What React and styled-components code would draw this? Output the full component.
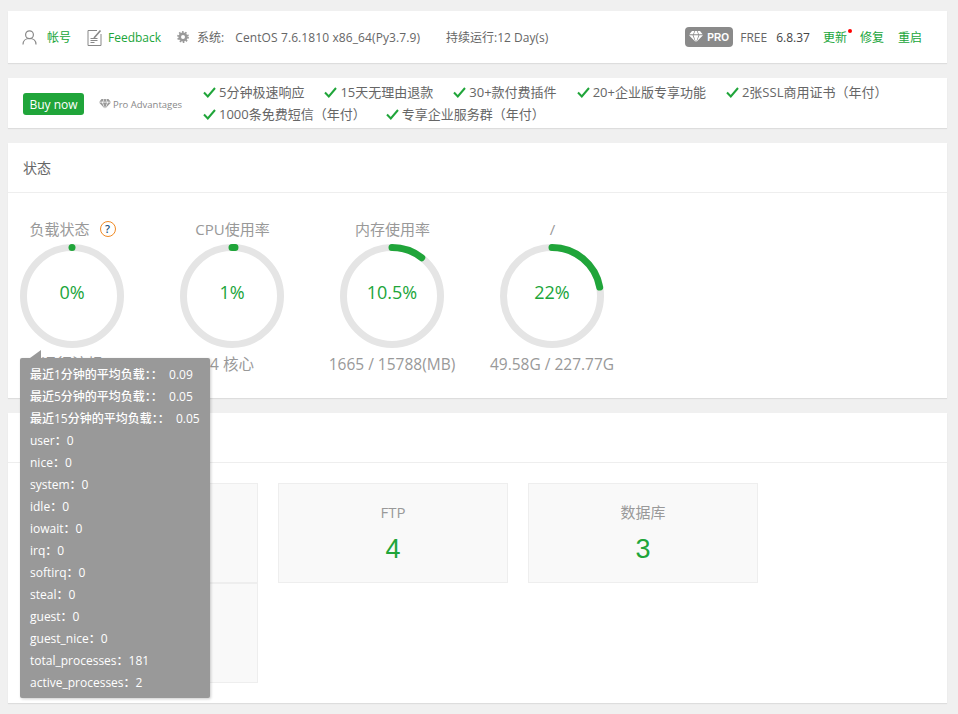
import React from "react";
import styled, { createGlobalStyle } from "styled-components";

const GlobalStyle = createGlobalStyle`
  html, body {
    margin: 0;
    padding: 0;
    background: #f0f0f0;
    font-family: "Open Sans", "Noto Sans CJK SC", sans-serif;
    font-size: 12px;
    color: #666;
  }
  * { box-sizing: border-box; }
`;

const Page = styled.div`
  position: relative;
  width: 958px;
  height: 714px;
  overflow: hidden;
  padding: 11px 11px 0 8px;
`;

const Panel = styled.section`
  background: #fff;
  box-shadow: 0 1px 1px rgba(0, 0, 0, 0.08);
  margin-bottom: 15px;
`;

const TopBar = styled(Panel)`
  height: 52px;
  display: flex;
  align-items: center;
  padding: 0 25px 0 14px;
  white-space: nowrap;
`;

const IconSlot = styled.span`
  display: inline-flex;
  margin-left: ${(p) => p.$left || 0}px;
`;

const GreenLink = styled.a`
  color: #20a53a;
  font-size: 12px;
  margin-left: ${(p) => p.$left || 0}px;
`;

const Info = styled.span`
  color: ${(p) => p.$color || "#666"};
  font-size: 12px;
  letter-spacing: ${(p) => p.$track || 0}px;
  margin-left: ${(p) => p.$left || 0}px;
`;

const Spacer = styled.div`
  flex: 1;
`;

const ProBadge = styled.span`
  display: inline-flex;
  align-items: center;
  gap: 4px;
  width: 48px;
  height: 20px;
  padding-left: 4px;
  border-radius: 4px;
  background: #8a8a8a;
  color: #fff;
  font-family: "Liberation Sans", sans-serif;
  font-size: 10px;
  font-weight: 700;
`;

const Update = styled(GreenLink)`
  position: relative;
  &::after {
    content: "";
    position: absolute;
    top: 1px;
    right: -5px;
    width: 4px;
    height: 4px;
    border-radius: 50%;
    background: #f00;
  }
`;

const BuyBar = styled(Panel)`
  height: 50px;
  display: flex;
  align-items: center;
  padding: 0 0 0 15px;
`;

const BuyButton = styled.button`
  width: 61px;
  height: 22px;
  margin-top: 2px;
  padding: 0;
  border: 0;
  border-radius: 3px;
  background: #20a53a;
  color: #fff;
  font: 500 12px "Open Sans", sans-serif;
`;

const Advantages = styled.span`
  display: inline-flex;
  align-items: center;
  gap: 2px;
  width: 98px;
  margin: 2px 0 0 15px;
  color: #888;
  font-size: 9.5px;
  white-space: nowrap;
`;

const Perks = styled.ul`
  list-style: none;
  margin: 0 0 0 6px;
  padding: 0;
  width: 715px;
  display: flex;
  flex-wrap: wrap;
  column-gap: 20px;
  font-size: 13px;
  line-height: 22px;
`;

const Perk = styled.li`
  display: flex;
  align-items: center;
  gap: 3px;
  color: #666;
  white-space: nowrap;
`;

const PanelTitle = styled.h2`
  margin: 0;
  height: 50px;
  line-height: 50px;
  padding-left: 15px;
  border-bottom: 1px solid #eee;
  color: #666;
  font-size: 14px;
  font-weight: 400;
`;

const StatusPanel = styled(Panel)`
  height: 255px;
`;

const Gauges = styled.div`
  display: flex;
  gap: 32px;
  padding-top: 26px;
`;

const Gauge = styled.div`
  width: 128px;
  display: flex;
  flex-direction: column;
  align-items: center;
  white-space: nowrap;
`;

const GaugeTitle = styled.div`
  display: flex;
  align-items: flex-start;
  height: 25px;
  margin-left: 1px;
  line-height: 20px;
  color: #999;
  font-size: 15px;
`;

const Help = styled.span`
  width: 16px;
  height: 16px;
  margin: 2px 0 0 10px;
  border: 1px solid #f08a24;
  border-radius: 50%;
  color: #23527c;
  font-size: 11px;
  font-weight: 600;
  line-height: 14px;
  text-align: center;
`;

const Ring = styled.div`
  position: relative;
  width: 104px;
  height: 104px;
`;

const RingValue = styled.div`
  position: absolute;
  inset: 0 0 8px;
  display: flex;
  align-items: center;
  justify-content: center;
  color: #20a53a;
  font-size: 18px;
`;

const GaugeNote = styled.div`
  margin-top: 6px;
  color: #999;
  font-size: 15.5px;
  line-height: 20px;
`;

const OverviewPanel = styled(Panel)`
  height: 290px;
`;

const Cards = styled.div`
  display: grid;
  grid-template-columns: repeat(3, 230px);
  grid-auto-rows: 100px;
  column-gap: 20px;
  padding: 20px 0 0 20px;
`;

const Card = styled.div`
  display: flex;
  flex-direction: column;
  align-items: center;
  padding-top: 18px;
  background: #f9f9f9;
  border: 1px solid #eee;
`;

const CardLabel = styled.div`
  color: #999;
  font-size: 15px;
  line-height: 20px;
`;

const CardValue = styled.div`
  margin-top: 12px;
  color: #20a53a;
  font-family: "Liberation Sans", sans-serif;
  font-size: 27px;
  line-height: 30px;
`;

const Tooltip = styled.div`
  position: absolute;
  left: 20px;
  top: 358px;
  width: 190px;
  height: 340px;
  padding: 6px 10px;
  border-radius: 2px;
  background: #999;
  box-shadow: 1px 1px 3px rgba(0, 0, 0, 0.2);
  color: #fff;
  font-size: 12px;
  font-weight: 500;
  line-height: 22px;
  white-space: pre;
  &::before {
    content: "";
    position: absolute;
    left: 10px;
    top: -8px;
    border-style: solid;
    border-width: 8px 0 0 11px;
    border-color: transparent transparent transparent #999;
    transform: scaleX(-1);
  }
`;

function UserIcon() {
  return (
    <svg width="15" height="15" viewBox="0 0 15 15" fill="none" stroke="#888" strokeWidth="1.200">
      <circle cx="7.500" cy="4.700" r="3.900" />
      <path d="M1 14.500c0-3.800 2.500-6 6.500-6s6.500 2.200 6.500 6" />
    </svg>
  );
}

function FeedbackIcon() {
  return (
    <svg width="15" height="17" viewBox="0 0 15 17" fill="none" stroke="#888" strokeWidth="1">
      <path d="M10 1.500H1v15h13V5" />
      <path d="M3.500 9.500h7M3.500 11.500h7M3.500 13.500h4" />
      <path d="M7 9l6.500-7.500" strokeWidth="1.600" />
    </svg>
  );
}

function GearIcon() {
  return (
    <svg width="12" height="12" viewBox="0 0 12 12">
      <circle cx="6" cy="6" r="3.300" fill="none" stroke="#999" strokeWidth="2.600" />
      <circle cx="6" cy="6" r="5" fill="none" stroke="#999" strokeWidth="1.800" strokeDasharray="1.600 1.540" />
    </svg>
  );
}

function DiamondIcon({ size, color }) {
  return (
    <svg width={size} height={size * 0.8} viewBox="0 0 15 12" fill={color}>
      <path d="M3.200 0h2.600L4.400 3.500H.4zM6.600 0h1.800l1.400 3.500H5.200zM9.200 0h2.600l2.800 3.500h-4zM0 4.500h3.800L6.800 11.500zM4.800 4.500h5.400L7.500 12zM11.200 4.500H15L8.200 11.500z" />
    </svg>
  );
}

function CheckIcon() {
  return (
    <svg width="13" height="11" viewBox="0 0 13 11" fill="none" stroke="#20a53a" strokeWidth="2">
      <path d="M1 5.500L4.800 9.500L12 1" />
    </svg>
  );
}

function RingChart({ percent }) {
  const r = 48.5;
  const len = 2 * Math.PI * r;
  return (
    <svg width="104" height="104" viewBox="0 0 104 104" fill="none" strokeWidth="7">
      <circle cx="52" cy="52" r={r} stroke="#e5e5e5" />
      <circle
        cx="52"
        cy="52"
        r={r}
        stroke="#20a53a"
        strokeLinecap="round"
        strokeDasharray={`${(len * percent) / 100} ${len}`}
        transform="rotate(-90 52 52)"
      />
    </svg>
  );
}

const gauges = [
  { title: "负载状态", help: true, value: "0%", percent: 0, note: "运行流畅" },
  { title: "CPU使用率", value: "1%", percent: 1, note: "4 核心" },
  { title: "内存使用率", value: "10.5%", percent: 10.5, note: "1665 / 15788(MB)" },
  { title: "/", value: "22%", percent: 22, note: "49.58G / 227.77G" },
];

const perks = [
  "5分钟极速响应",
  "15天无理由退款",
  "30+款付费插件",
  "20+企业版专享功能",
  "2张SSL商用证书（年付）",
  "1000条免费短信（年付）",
  "专享企业服务群（年付）",
];

const cards = [
  { label: "网站", value: 1 },
  { label: "FTP", value: 4 },
  { label: "数据库", value: 3 },
  { label: "安全风险", value: 0 },
];

const loadInfo = [
  "最近1分钟的平均负载：：  0.09",
  "最近5分钟的平均负载：：  0.05",
  "最近15分钟的平均负载：：  0.05",
  "user：0",
  "nice：0",
  "system：0",
  "idle：0",
  "iowait：0",
  "irq：0",
  "softirq：0",
  "steal：0",
  "guest：0",
  "guest_nice：0",
  "total_processes：181",
  "active_processes：2",
];

export default function App() {
  return (
    <Page>
      <GlobalStyle />
      <TopBar as="header">
        <UserIcon />
        <GreenLink $left={10}>帐号</GreenLink>
        <IconSlot $left={16}>
          <FeedbackIcon />
        </IconSlot>
        <GreenLink $left={6}>Feedback</GreenLink>
        <IconSlot $left={16}>
          <GearIcon />
        </IconSlot>
        <Info $left={8}>系统:</Info>
        <Info $left={11} $track={0.1}>CentOS 7.6.1810 x86_64(Py3.7.9)</Info>
        <Info $left={26}>持续运行:12 Day(s)</Info>
        <Spacer />
        <ProBadge>
          <DiamondIcon size={14} color="#fff" />
          PRO
        </ProBadge>
        <Info $left={7}>FREE</Info>
        <Info $left={9} $color="#444">6.8.37</Info>
        <Update $left={13}>更新</Update>
        <GreenLink $left={13}>修复</GreenLink>
        <GreenLink $left={14}>重启</GreenLink>
      </TopBar>
      <BuyBar>
        <BuyButton>Buy now</BuyButton>
        <Advantages>
          <DiamondIcon size={12} color="#999" />
          Pro Advantages
        </Advantages>
        <Perks>
          {perks.map((p) => (
            <Perk key={p}>
              <CheckIcon />
              {p}
            </Perk>
          ))}
        </Perks>
      </BuyBar>
      <StatusPanel>
        <PanelTitle>状态</PanelTitle>
        <Gauges>
          {gauges.map((g) => (
            <Gauge key={g.title}>
              <GaugeTitle>
                {g.title}
                {g.help && <Help>?</Help>}
              </GaugeTitle>
              <Ring>
                <RingChart percent={g.percent} />
                <RingValue>{g.value}</RingValue>
              </Ring>
              <GaugeNote>{g.note}</GaugeNote>
            </Gauge>
          ))}
        </Gauges>
      </StatusPanel>
      <OverviewPanel>
        <PanelTitle>概览</PanelTitle>
        <Cards>
          {cards.map((c) => (
            <Card key={c.label}>
              <CardLabel>{c.label}</CardLabel>
              <CardValue>{c.value}</CardValue>
            </Card>
          ))}
        </Cards>
      </OverviewPanel>
      <Tooltip>
        {loadInfo.map((line) => (
          <div key={line}>{line}</div>
        ))}
      </Tooltip>
    </Page>
  );
}
